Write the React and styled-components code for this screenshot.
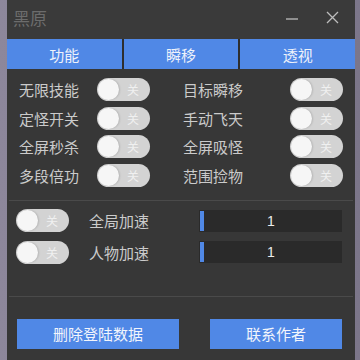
import React from 'react';
import styled, { createGlobalStyle } from 'styled-components';

const GlobalStyle = createGlobalStyle`
  html, body {
    margin: 0;
    padding: 0;
    height: 360px;
    overflow: hidden;
    background: linear-gradient(90deg, #8d879b 0%, #7c768a 100%);
    font-family: "Noto Sans CJK SC", "Noto Sans", sans-serif;
  }
`;

const Window = styled.div`
  margin-left: 7px;
  width: 348px;
  height: 370px;
  background: #373737;
  display: flex;
  flex-direction: column;
`;

const TitleBar = styled.div`
  height: 39px;
  background: #3a3a3a;
  display: flex;
  align-items: center;
  padding: 0 16px 0 6px;
`;

const Title = styled.div`
  flex: 1;
  color: #6c6c6c;
  font-size: 17px;
  line-height: 1;
  margin-top: -4px;
`;

const WinButton = styled.div`
  width: 14px;
  height: 14px;
  display: flex;
  align-items: center;
  justify-content: center;
  margin-left: 26px;
  margin-top: -4px;
`;

const Tabs = styled.div`
  display: flex;
  height: 30px;
  background: #2e2e2e;
  gap: 2px;
`;

const Tab = styled.div`
  flex: 1;
  background: #5088e6;
  color: #eef2fb;
  font-size: 15px;
  display: flex;
  align-items: center;
  justify-content: center;
`;

const Grid = styled.div`
  display: grid;
  grid-template-columns: 131px 160px;
  column-gap: 33px;
  row-gap: 5.5px;
  padding: 9px 0 13px 12px;
`;

const Cell = styled.div`
  display: flex;
  align-items: center;
  justify-content: space-between;
  height: 23px;
`;

const Label = styled.span`
  color: #cbcbcb;
  font-size: 15px;
  white-space: nowrap;
`;

const Divider = styled.div`
  height: 1px;
  background: #4a4a4a;
  margin: 0 2px;
`;

const SpeedList = styled.div`
  display: flex;
  flex-direction: column;
  gap: 9px;
  padding: 9px 13px 32px 9px;
`;

const SpeedRow = styled.div`
  display: flex;
  align-items: center;
  height: 22.5px;
`;

const SpeedLabel = styled(Label)`
  margin-left: 20px;
  width: 110px;
`;

const NumBox = styled.div`
  flex: 1;
  height: 22px;
  background: #2a2a2a;
  display: flex;
  align-items: center;
  color: #ececec;
  font-family: "Liberation Sans", sans-serif;
  font-size: 14px;
`;

const Caret = styled.div`
  width: 4px;
  height: 20px;
  background: #5088e6;
  margin-left: 1px;
`;

const NumValue = styled.span`
  flex: 1;
  text-align: center;
  margin-right: 4px;
`;

const Footer = styled.div`
  display: flex;
  justify-content: space-between;
  padding: 22px 13px 0 10px;
`;

const ActionButton = styled.button`
  width: ${p => p.$w}px;
  height: 30px;
  border: none;
  background: #5088e6;
  color: #f2f5fc;
  font-family: inherit;
  font-size: 15px;
  padding: 0;
`;

const Pill = styled.div`
  width: 53px;
  height: 23px;
  border-radius: 12px;
  background: #d3d3d3;
  display: flex;
  align-items: center;
  padding: 0 1px;
  box-sizing: border-box;
  flex-shrink: 0;
`;

const Knob = styled.div`
  width: 21px;
  height: 21px;
  border-radius: 50%;
  background: #f6f6f6;
  box-shadow: 1px 0 2px rgba(0, 0, 0, 0.15);
`;

const PillText = styled.span`
  flex: 1;
  text-align: center;
  color: #f0f0f0;
  font-size: 12px;
  margin-right: 2px;
`;

const Toggle = () => (
  <Pill>
    <Knob />
    <PillText>关</PillText>
  </Pill>
);

const features = [
  ['无限技能', '目标瞬移'],
  ['定怪开关', '手动飞天'],
  ['全屏秒杀', '全屏吸怪'],
  ['多段倍功', '范围捡物'],
];

export default function App() {
  return (
    <>
      <GlobalStyle />
      <Window>
        <TitleBar>
          <Title>黑原</Title>
          <WinButton>
            <svg width="14" height="14" viewBox="0 0 14 14">
              <line x1="1" y1="8" x2="13" y2="8" stroke="#bdbdbd" strokeWidth="1.3" />
            </svg>
          </WinButton>
          <WinButton>
            <svg width="13" height="13" viewBox="0 0 13 13">
              <path d="M1 1L12 12M12 1L1 12" stroke="#bdbdbd" strokeWidth="1.3" />
            </svg>
          </WinButton>
        </TitleBar>
        <Tabs>
          <Tab>功能</Tab>
          <Tab>瞬移</Tab>
          <Tab>透视</Tab>
        </Tabs>
        <Grid>
          {features.flat().map(name => (
            <Cell key={name}>
              <Label>{name}</Label>
              <Toggle />
            </Cell>
          ))}
        </Grid>
        <Divider />
        <SpeedList>
          {['全局加速', '人物加速'].map(name => (
            <SpeedRow key={name}>
              <Toggle />
              <SpeedLabel>{name}</SpeedLabel>
              <NumBox>
                <Caret />
                <NumValue>1</NumValue>
              </NumBox>
            </SpeedRow>
          ))}
        </SpeedList>
        <Divider />
        <Footer>
          <ActionButton $w={162}>删除登陆数据</ActionButton>
          <ActionButton $w={132}>联系作者</ActionButton>
        </Footer>
      </Window>
    </>
  );
}
